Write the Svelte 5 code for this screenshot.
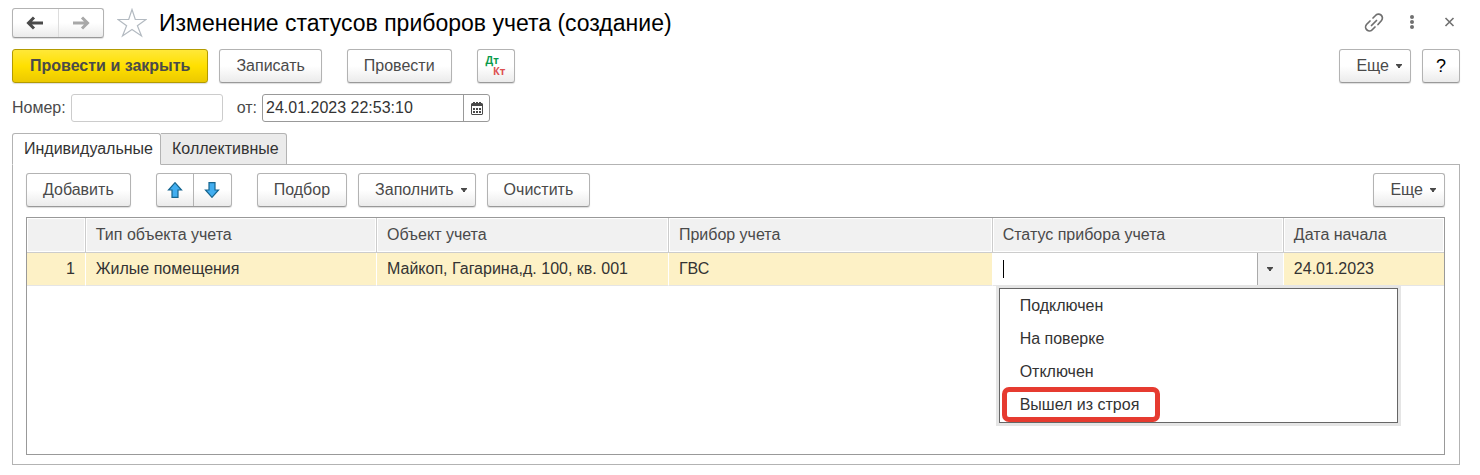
<script>
  const columns = [
    { key: 'num', title: '' },
    { key: 'type', title: 'Тип объекта учета' },
    { key: 'object', title: 'Объект учета' },
    { key: 'device', title: 'Прибор учета' },
    { key: 'status', title: 'Статус прибора учета' },
    { key: 'start', title: 'Дата начала' },
  ];

  const rows = [
    { num: 1, type: 'Жилые помещения', object: 'Майкоп, Гагарина,д. 100, кв. 001', device: 'ГВС', start: '24.01.2023' },
  ];

  const statuses = ['Подключен', 'На поверке', 'Отключен', 'Вышел из строя'];
  const tabs = ['Индивидуальные', 'Коллективные'];

  let activeTab = $state(0);
  let open = $state(true);
  let number = $state('');
  let date = $state('24.01.2023 22:53:10');
  let status = $state('');

  function pick(s) {
    status = s;
    open = false;
  }
</script>

{#snippet caret()}
  <svg width="6" height="4" viewBox="0 0 6 4" aria-hidden="true"><path d="M0 0h6v1L4 3v1H2V3L0 1z" fill="#4a4a4a" /></svg>
{/snippet}

<main>
  <header>
    <div class="group nav">
      <button type="button" aria-label="Назад">
        <svg width="18" height="14" viewBox="0 0 18 14"><path d="M8 1.500 2.500 7 8 12.500M3 7H17" fill="none" stroke="#4a4a4a" stroke-width="3" /></svg>
      </button>
      <button type="button" aria-label="Вперед">
        <svg width="18" height="14" viewBox="0 0 18 14"><path d="m10 1.500 5.500 5.500-5.500 5.500M15 7H1" fill="none" stroke="#a8a8a8" stroke-width="3" /></svg>
      </button>
    </div>
    <button type="button" class="plain star" aria-label="В избранное">
      <svg width="30" height="30" viewBox="0 0 30 30"><path d="M15 1.500 18.300 11.500H29L20.400 17.700 24.500 28 15 21.500 5.500 28 9.600 17.700 1 11.500H11.700z" fill="none" stroke="#b3bac1" stroke-width="1.200" /></svg>
    </button>
    <h1>Изменение статусов приборов учета (создание)</h1>
    <div class="window">
      <button type="button" class="plain" aria-label="Ссылка">
        <svg width="20" height="20" viewBox="0 0 20 20" fill="none" stroke="#707070" stroke-width="1.700" stroke-linecap="round">
          <path d="M9 5 11.500 2.500a3.700 3.700 0 0 1 6 5L14 11.500" />
          <path d="M11 14 8.500 16.500a3.700 3.700 0 0 1-6-5L6 8" />
          <path d="m7.500 12.500 5-5" />
        </svg>
      </button>
      <button type="button" class="plain" aria-label="Меню">
        <svg width="20" height="20" viewBox="0 0 20 20" fill="#707070"><circle cx="10" cy="4" r="2" /><circle cx="10" cy="9" r="2" /><circle cx="10" cy="14" r="2" /></svg>
      </button>
      <button type="button" class="plain" aria-label="Закрыть">
        <svg width="20" height="20" viewBox="0 0 20 20"><path d="m5.500 5 8 8M13.500 5l-8 8" stroke="#707070" stroke-width="1.600" /></svg>
      </button>
    </div>
  </header>

  <div class="commands">
    <button type="button" class="btn primary">Провести и закрыть</button>
    <button type="button" class="btn">Записать</button>
    <button type="button" class="btn spaced">Провести</button>
    <button type="button" class="btn square spaced dtkt"><span class="dt">Дт</span><span class="kt">Кт</span></button>
    <button type="button" class="btn drop more">Еще {@render caret()}</button>
    <button type="button" class="btn square help">?</button>
  </div>

  <div class="fields">
    <label for="number">Номер:</label>
    <input id="number" class="number" type="text" bind:value={number} />
    <label for="date" class="from">от:</label>
    <div class="date">
      <input id="date" type="text" bind:value={date} />
      <button type="button" aria-label="Выбрать дату">
        <svg width="12" height="13" viewBox="0 0 12 13">
          <path d="M1 1h1V0h2v1h1V0h2v1h1V0h2v1h1l1 1v10l-1 1H1l-1-1V2z" fill="#4a4a4a" />
          <path d="M1 4h10v8H1z" fill="#fff" />
          <path d="M2 6h2v2H2zM5 6h2v2H5zM8 6h2v2H8zM2 9h2v2H2zM5 9h2v2H5zM8 9h2v2H8z" fill="#4a4a4a" />
        </svg>
      </button>
    </div>
  </div>

  <div class="tabs" role="tablist">
    {#each tabs as tab, i}
      <button type="button" role="tab" aria-selected={activeTab === i} class:active={activeTab === i} onclick={() => (activeTab = i)}>{tab}</button>
    {/each}
  </div>

  <section class="panel">
    <div class="commands">
      <button type="button" class="btn">Добавить</button>
      <div class="group move spaced">
        <button type="button" aria-label="Вверх">
          <svg width="16" height="16" viewBox="0 0 16 16"><path d="M8 .7 14.500 8H11v7.300H5V8H1.500z" fill="#42aef0" stroke="#16658f" stroke-width="1.200" /></svg>
        </button>
        <button type="button" aria-label="Вниз">
          <svg width="16" height="16" viewBox="0 0 16 16"><path d="M8 15.300 1.500 8H5V.7h6V8h3.500z" fill="#42aef0" stroke="#16658f" stroke-width="1.200" /></svg>
        </button>
      </div>
      <button type="button" class="btn spaced">Подбор</button>
      <button type="button" class="btn drop">Заполнить {@render caret()}</button>
      <button type="button" class="btn">Очистить</button>
      <button type="button" class="btn drop more">Еще {@render caret()}</button>
    </div>

    <div class="grid">
      <table>
        <thead>
          <tr>
            {#each columns as col}
              <th class={col.key} scope="col">{col.title}</th>
            {/each}
          </tr>
        </thead>
        <tbody>
          {#each rows as row}
            <tr>
              {#each columns as col}
                {#if col.key === 'status'}
                  <td class="edit">
                    <div class="combo">
                      <input type="text" aria-label="Статус прибора учета" bind:value={status} />
                      <button type="button" aria-label="Показать список" onclick={() => (open = !open)}>{@render caret()}</button>
                      {#if open}
                        <span class="cursor"></span>
                        <ul class="list" role="listbox">
                          {#each statuses as s, i}
                            <li role="option" aria-selected={status === s}>
                              <button type="button" class:marked={i === 3} onclick={() => pick(s)}>{s}</button>
                            </li>
                          {/each}
                        </ul>
                      {/if}
                    </div>
                  </td>
                {:else}
                  <td class={col.key}>{row[col.key]}</td>
                {/if}
              {/each}
            </tr>
          {/each}
        </tbody>
      </table>
    </div>
  </section>
</main>

<style>
  :global(body) {
    background: #fff;
  }
  main {
    padding: 8px 20px 10px 12px;
    font-family: 'Liberation Sans', Arial, sans-serif;
    font-size: 16px;
    line-height: 20px;
    color: #4a4a4a;
  }
  main, main :global(*) {
    box-sizing: border-box;
  }
  button, input {
    font: inherit;
    color: inherit;
    margin: 0;
  }
  button {
    display: flex;
    align-items: center;
    justify-content: center;
    white-space: nowrap;
  }
  svg {
    display: block;
    flex: none;
  }

  header {
    display: flex;
    align-items: center;
    height: 30px;
  }
  h1 {
    margin: 0 0 0 12px;
    font-size: 23px;
    line-height: 30px;
    font-weight: 400;
    color: #000;
    white-space: nowrap;
  }
  .plain {
    padding: 0;
    border: 0;
    background: none;
  }
  .star { margin-left: 13px; }
  .window {
    display: flex;
    gap: 18px;
    margin-left: auto;
  }

  .btn, .group {
    height: 34px;
    border: 1px solid #b3b3b3;
    border-bottom-color: #999;
    border-radius: 3px;
    background: linear-gradient(#fff 50%, #ebebeb);
    box-shadow: 0 1px 1px #ddd;
  }
  .btn { padding: 0 16px; }
  .btn.primary {
    padding: 0 17px;
    border-color: #b39b00;
    background: linear-gradient(#ffe838, #ffe000 50%, #ecc900);
    font-weight: 700;
  }
  .btn.square {
    width: 38px;
    padding: 0;
  }
  .help {
    color: #000;
    font-size: 18px;
  }
  .btn.drop {
    gap: 7px;
    padding-right: 8px;
  }
  .group {
    display: flex;
  }
  .group button {
    flex: 1;
    padding: 0;
    border: 0;
    background: none;
  }
  .group button + button { border-left: 1px solid #b3b3b3; }
  .nav {
    width: 92px;
    height: 30px;
  }
  .nav button + button { border-left-color: #ddd; }
  .move { width: 76px; }

  .dtkt {
    flex-direction: column;
    font-family: 'Open Sans', sans-serif;
    font-size: 10px;
    line-height: 11px;
    font-weight: 700;
  }
  .dt {
    padding-right: 7px;
    color: #0a9b4b;
  }
  .kt {
    padding-left: 7px;
    color: #dd4f4f;
  }

  .commands {
    display: flex;
    gap: 11px;
    margin-top: 11px;
  }
  .commands .spaced { margin-left: 14px; }
  .commands .more { margin-left: auto; }

  .fields {
    display: flex;
    align-items: center;
    margin-top: 11px;
  }
  .number, .date {
    height: 28px;
    border: 1px solid #ccc;
    border-radius: 3px;
    margin-left: 5px;
  }
  .number { width: 152px; }
  .from { margin-left: 14px; }
  .date {
    display: flex;
    width: 228px;
    border-color: #999;
  }
  .date input {
    flex: 1;
    min-width: 0;
    padding: 0 3px;
    border: 0;
    background: none;
    color: #333;
  }
  .date button {
    width: 26px;
    padding: 0;
    border: 0;
    border-left: 1px solid #999;
    background: none;
  }

  .tabs {
    position: relative;
    display: flex;
    margin-top: 11px;
    margin-bottom: -1px;
  }
  .tabs button {
    height: 32px;
    padding: 0 7px 0 11px;
    border: 1px solid #b3b3b3;
    border-left-width: 0;
    border-radius: 0 3px 0 0;
    background: #ebebeb;
    color: #333;
  }
  .tabs button:first-child {
    border-left-width: 1px;
    border-radius: 3px 3px 0 0;
  }
  .tabs .active {
    border-bottom-color: #fff;
    background: #fff;
  }

  .panel {
    padding: 0 14px 9px 13px;
    border: 1px solid #b3b3b3;
  }
  .panel .commands { margin-top: 8px; }

  .grid {
    min-height: 238px;
    margin-top: 10px;
    border: 1px solid #999;
  }
  table {
    width: 100%;
    table-layout: fixed;
    border-collapse: separate;
    border-spacing: 0;
  }
  th, td {
    padding: 0 10px;
    text-align: left;
    white-space: nowrap;
  }
  th {
    height: 35px;
    border-right: 1px solid #ccc;
    border-bottom: 1px solid #ccc;
    background: #f1f1f1;
    box-shadow: inset 0 0 0 1px #fff;
    font-weight: 400;
  }
  td {
    height: 33px;
    border-right: 1px solid #fff;
    border-bottom: 1px solid #e5e5e5;
    background: #fdf1c6;
    color: #333;
  }
  th:last-child, td:last-child { border-right: 0; }
  .num {
    width: 4.15%;
    text-align: right;
  }
  .type { width: 20.55%; }
  .object { width: 20.6%; }
  .device { width: 22.85%; }
  .status { width: 20.55%; }

  .edit {
    padding: 0;
    background: #fff;
  }
  .combo {
    position: relative;
    display: flex;
    height: 32px;
  }
  .combo input {
    flex: 1;
    min-width: 0;
    padding: 0 10px;
    border: 0;
    background: #fff;
    outline: none;
  }
  .combo > button {
    width: 26px;
    padding: 0;
    border: 0;
    border-left: 1px solid #aaa;
    background: #f1f1f1;
  }
  .cursor {
    position: absolute;
    left: 10px;
    top: 7px;
    width: 1px;
    height: 18px;
    background: #000;
  }
  .list {
    position: absolute;
    left: 6px;
    top: 35px;
    z-index: 1;
    width: 399px;
    margin: 0;
    padding: 0 2px 1px;
    border: 1px solid #666;
    background: #fff;
    box-shadow: 0 0 0 3px #e5e5e5;
    list-style: none;
  }
  .list li {
    display: flex;
    height: 33px;
  }
  .list button {
    padding: 0 18px;
    border: 0;
    background: none;
  }
  .list .marked {
    height: 35px;
    margin-top: -1px;
    padding: 0 16px 0 13px;
    border: 5px solid #e63b30;
    border-radius: 7px;
  }
</style>
